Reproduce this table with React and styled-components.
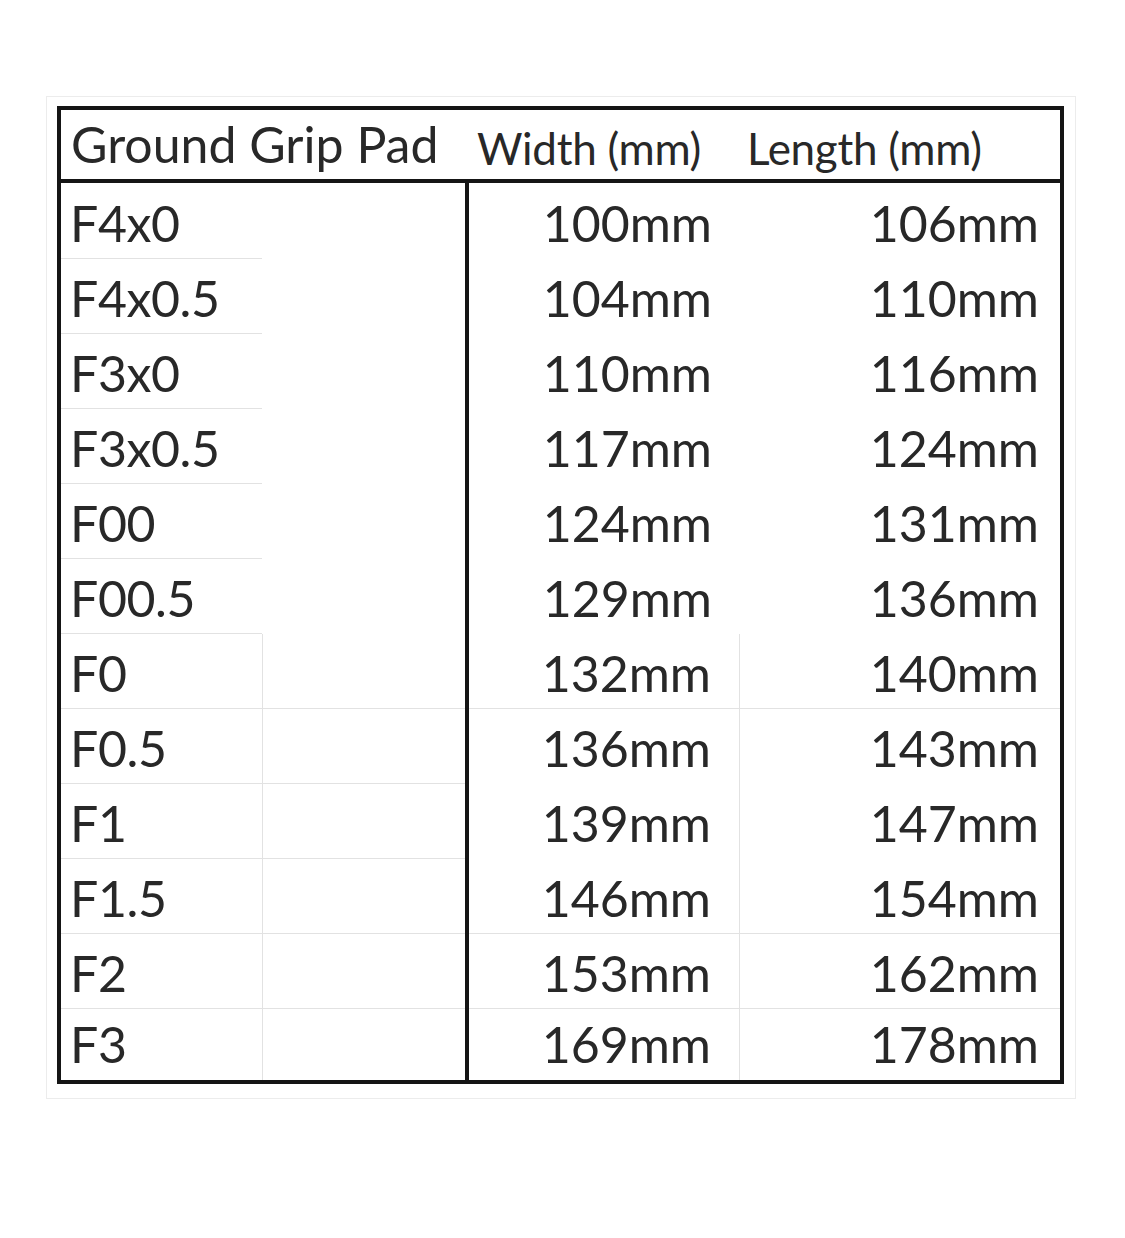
import React from 'react'
import styled, { createGlobalStyle } from 'styled-components'

const rows = [
    { name: 'F4x0', width: '100mm', length: '106mm', grid: 'short' },
    { name: 'F4x0.5', width: '104mm', length: '110mm', grid: 'short' },
    { name: 'F3x0', width: '110mm', length: '116mm', grid: 'short' },
    { name: 'F3x0.5', width: '117mm', length: '124mm', grid: 'short' },
    { name: 'F00', width: '124mm', length: '131mm', grid: 'short' },
    { name: 'F00.5', width: '129mm', length: '136mm', grid: 'short' },
    { name: 'F0', width: '132mm', length: '140mm', grid: 'full' },
    { name: 'F0.5', width: '136mm', length: '143mm', grid: 'left' },
    { name: 'F1', width: '139mm', length: '147mm', grid: 'left' },
    { name: 'F1.5', width: '146mm', length: '154mm', grid: 'full' },
    { name: 'F2', width: '153mm', length: '162mm', grid: 'full' },
    { name: 'F3', width: '169mm', length: '178mm', grid: 'last' },
]

const Global = createGlobalStyle`
    body {
        margin: 0;
        background: #ffffff;
        font-family: 'Lato', 'Liberation Sans', sans-serif;
        color: #282828;
    }
`

const App = () => {
    return (
        <Page>
            <Global />
            <Frame>
                <Table>
                    <HeadCell span={2} size={50} pl={10}>Ground Grip Pad</HeadCell>
                    <HeadCell size={44} pl={12}>Width (mm)</HeadCell>
                    <HeadCell size={44} pl={7}>Length (mm)</HeadCell>

                    {rows.map((r) => (
                        <React.Fragment key={r.name}>
                            <NameCell line={r.grid !== 'last'} divider={r.grid !== 'short'}>
                                {r.name}
                            </NameCell>
                            <BlankCell line={r.grid !== 'short' && r.grid !== 'last'} />
                            <ValueCell thick pr={28} line={r.grid === 'full'} divider={r.grid !== 'short'}>
                                {r.width}
                            </ValueCell>
                            <ValueCell pr={21} line={r.grid === 'full'}>
                                {r.length}
                            </ValueCell>
                        </React.Fragment>
                    ))}
                </Table>
            </Frame>
        </Page>
    )
}

export default App

const Page = styled.div`
    width: 1125px;
    height: 1238px;
    padding-top: 96px;
    padding-left: 46px;
    box-sizing: border-box;
`

const Frame = styled.div`
    width: 1030px;
    box-sizing: border-box;
    border: 1px solid #ececec;
    padding: 9px 12px 14px 10px;
`

const Table = styled.div`
    width: 1007px;
    box-sizing: border-box;
    border: 4px solid #151515;
    display: grid;
    grid-template-columns: 202px 202px 275px 1fr;
    grid-template-rows: 73px 76px repeat(10, 75px) 71px;
`

const Cell = styled.div`
    box-sizing: border-box;
    display: flex;
    align-items: flex-end;
    white-space: nowrap;
    font-size: 50px;
    line-height: 50px;
    padding-bottom: 11px;
    box-shadow: ${(p) => (p.line ? 'inset 0 -1px 0 #e2e2e2' : 'none')};
`

const HeadCell = styled(Cell)`
    grid-column: span ${(p) => p.span || 1};
    font-size: ${(p) => p.size}px;
    line-height: ${(p) => p.size}px;
    padding-left: ${(p) => p.pl}px;
    padding-bottom: ${(p) => (p.size > 46 ? 10 : 9)}px;
    border-bottom: 4px solid #151515;
    letter-spacing: ${(p) => (p.size > 46 ? '0' : '-0.3px')};
`

const NameCell = styled(Cell)`
    padding-left: 9px;
    letter-spacing: -0.4px;
    border-right: 1px solid ${(p) => (p.divider ? '#e2e2e2' : '#ffffff')};
`

const BlankCell = styled(Cell)``

const ValueCell = styled(Cell)`
    justify-content: flex-end;
    padding-right: ${(p) => p.pr}px;
    border-left: ${(p) => (p.thick ? '4px solid #151515' : 'none')};
    border-right: ${(p) => (p.divider ? '1px solid #e2e2e2' : 'none')};
`
